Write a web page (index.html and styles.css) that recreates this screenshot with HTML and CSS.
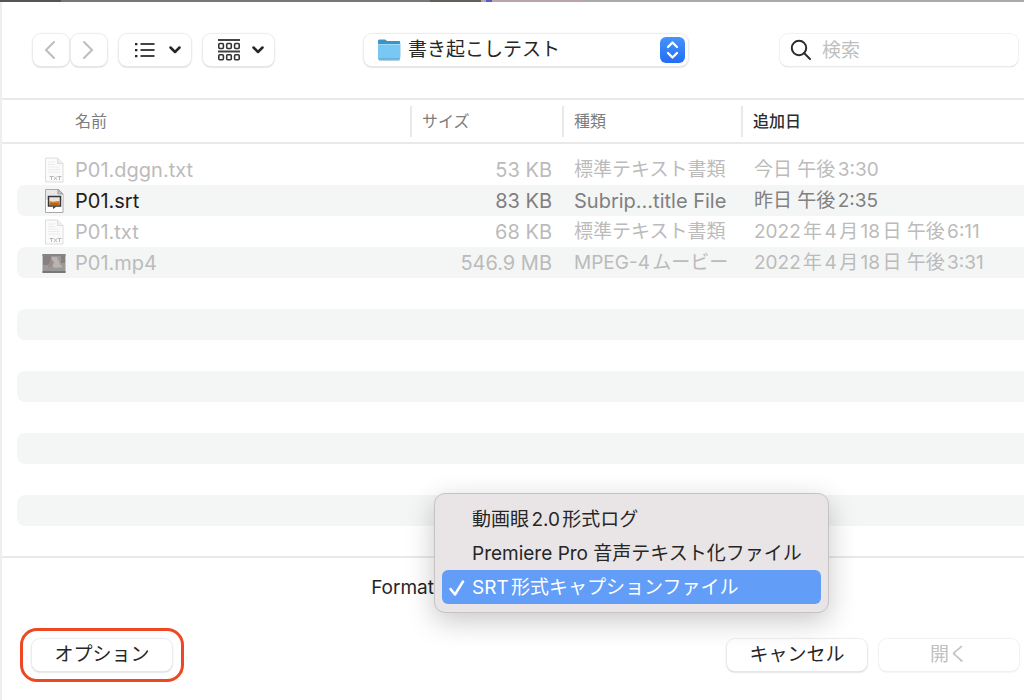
FILE: index.html
```html
<!DOCTYPE html>
<html lang="ja">
<head>
<meta charset="utf-8">
<meta name="viewport" content="width=device-width, initial-scale=1">
<title>書き起こしテスト</title>
<link rel="stylesheet" href="styles.css">
</head>
<body>
<div class="backdrop"></div>
<main class="dialog">
  <header class="toolbar">
    <div class="nav">
      <button class="button nav-button" type="button" aria-label="戻る" disabled>
        <svg width="12" height="20" viewBox="0 0 12 20"><path d="M10 2 2 10l8 8"/></svg>
      </button>
      <button class="button nav-button" type="button" aria-label="進む" disabled>
        <svg width="12" height="20" viewBox="0 0 12 20"><path d="m2 2 8 8-8 8"/></svg>
      </button>
    </div>
    <button class="button view-button" type="button" aria-label="リスト表示">
      <svg width="20" height="16" viewBox="0 0 20 16"><path class="thin" d="M5.5 2h14M5.5 8h14M5.5 14h14"/><path class="dots" d="M0 1h2.4v2.2H0zM0 7h2.4v2.2H0zM0 13h2.4v2.2H0z"/></svg>
      <svg width="12" height="10" viewBox="0 0 12 10"><path class="chevron" d="m1.5 2.5 4.5 4.5 4.5-4.5"/></svg>
    </button>
    <button class="button view-button group-button" type="button" aria-label="グループ">
      <svg width="22" height="22" viewBox="0 0 22 22"><path class="thin" d="M0 1h22M0 12.500h22"/><g class="cells"><rect x=".8" y="4.500" width="4.600" height="5" rx="1"/><rect x="8.700" y="4.500" width="4.600" height="5" rx="1"/><rect x="16.600" y="4.500" width="4.600" height="5" rx="1"/><rect x=".8" y="15.800" width="4.600" height="5" rx="1"/><rect x="8.700" y="15.800" width="4.600" height="5" rx="1"/><rect x="16.600" y="15.800" width="4.600" height="5" rx="1"/></g></svg>
      <svg width="12" height="10" viewBox="0 0 12 10"><path class="chevron" d="m1.500 2.500 4.500 4.500 4.500-4.500"/></svg>
    </button>
    <div class="button location">
      <svg width="24" height="22" viewBox="0 0 24 22"><path d="M1 2Q1 .5 2.500 .5h5.300q.7 0 1.200.6l.9.9H22q1.200 0 1.200 1.200V18H1z" fill="#3c93c8"/><rect x="1" y="5" width="22.200" height="16" rx="1.500" fill="#79c8f4"/><path d="M1 5.500h22.200" stroke="#a2dbf8"/><path d="M1.500 19.500h21.200" stroke="#67b4df"/><path d="M2 21h20.500" stroke="#6ca4c0"/></svg>
      <select class="location-select" aria-label="場所"><option>書き起こしテスト</option></select>
      <svg width="26" height="26" viewBox="0 0 26 26"><defs><linearGradient id="blue" x2="0" y2="1"><stop stop-color="#4594fb"/><stop offset="1" stop-color="#226df3"/></linearGradient></defs><rect width="25" height="26" rx="6" fill="url(#blue)"/><path d="m8 10 4.500-4.500L17 10M8 16l4.500 4.500L17 16" fill="none" stroke="#fff" stroke-width="2.300" stroke-linecap="round" stroke-linejoin="round"/></svg>
    </div>
    <label class="button search">
      <svg width="22" height="22" viewBox="0 0 22 22"><circle cx="9" cy="9" r="7.200"/><path d="m14 14 6 6"/></svg>
      <input class="search-input" type="search" placeholder="検索" aria-label="検索">
    </label>
  </header>

  <section class="list">
    <table class="files">
      <colgroup><col class="col-name"><col class="col-size"><col class="col-kind"><col></colgroup>
      <thead>
        <tr><th scope="col">名前</th><th scope="col"><span class="divided">サイズ</span></th><th scope="col"><span class="divided">種類</span></th><th scope="col" class="sorted"><span class="divided">追加日</span></th></tr>
      </thead>
      <tbody>
        <tr>
          <td><div class="file"><svg width="24" height="26" viewBox="0 0 24 26"><path d="M3.500 1h12l5.500 5.500V25h-17.500z" fill="#fbfbfb" stroke="#ddd"/><path d="M15.500 1v5.500H21" fill="#eee" stroke="#ddd"/><path d="M6 5h7M6 7.500h7M6 10h11M6 12.500h12M6 15h12" stroke="#ececec"/><path d="M7.500 19.500h4M9.500 19.500V23M12 19.500l3 3.500M15 19.500 12 23M15.500 19.500h4M17.500 19.500V23" stroke="#b8b8b8" fill="none"/></svg>P01.dggn.txt</div></td>
          <td>53 KB</td><td class="japanese">標準テキスト書類</td><td class="japanese">今日 午後3:30</td>
        </tr>
        <tr class="enabled">
          <td><div class="file"><svg width="24" height="26" viewBox="0 0 24 26"><path d="M3.500 1.500h13L21 6v18.500H3.500z" fill="#fff" stroke="#aaa"/><path d="M4 2h12v5h5v5H4z" fill="#e8e8e8"/><path d="M16 1.500V6h5z" fill="#ccc" stroke="#999"/><rect x="6.500" y="8.500" width="12" height="9.500" fill="#eee4da" stroke="#34383b" stroke-width="1.500"/><path d="M7.500 13q3 1 5 .5t5-.5v4h-10z" fill="#d57f27"/><path d="M7.500 16h10" stroke="#9e4e18"/><path d="M11 18.500h3.500L11 21z" fill="#3a3e41"/></svg>P01.srt</div></td>
          <td>83 KB</td><td>Subrip...title File</td><td class="japanese">昨日 午後2:35</td>
        </tr>
        <tr>
          <td><div class="file"><svg width="24" height="26" viewBox="0 0 24 26"><path d="M3.500 1h12l5.500 5.500V25h-17.500z" fill="#fbfbfb" stroke="#ddd"/><path d="M15.500 1v5.500H21" fill="#eee" stroke="#ddd"/><path d="M6 5h7M6 7.500h7M6 10h11M6 12.500h12M6 15h12" stroke="#ececec"/><path d="M7.500 19.500h4M9.500 19.500V23M12 19.500l3 3.500M15 19.500 12 23M15.500 19.500h4M17.500 19.500V23" stroke="#b8b8b8" fill="none"/></svg>P01.txt</div></td>
          <td>68 KB</td><td class="japanese">標準テキスト書類</td><td class="japanese">2022年4月18日 午後6:11</td>
        </tr>
        <tr>
          <td><div class="file"><svg width="24" height="26" viewBox="0 0 24 26"><rect x=".5" y="4" width="23" height="18.500" fill="#999"/><path d="M.5 4h23v2H.5z" fill="#858585"/><path d="M1 6h8v9H1zM19 6h4v7h-4z" fill="#888080"/><path d="M10 7h5l3 7 3 3-8 1-3-2-6 2 4-5z" fill="#bab3af"/><path d="m9 9 3 3-2 5-5 1z" fill="#9b8f8b"/><path d="M.5 21h23v2H.5z" fill="#777"/></svg>P01.mp4</div></td>
          <td>546.9 MB</td><td class="japanese">MPEG-4ムービー</td><td class="japanese">2022年4月18日 午後3:31</td>
        </tr>
        <tr><td></td><td></td><td></td><td></td></tr>
        <tr><td></td><td></td><td></td><td></td></tr>
        <tr><td></td><td></td><td></td><td></td></tr>
        <tr><td></td><td></td><td></td><td></td></tr>
        <tr><td></td><td></td><td></td><td></td></tr>
        <tr><td></td><td></td><td></td><td></td></tr>
        <tr><td></td><td></td><td></td><td></td></tr>
        <tr><td></td><td></td><td></td><td></td></tr>
      </tbody>
    </table>
  </section>

  <footer class="footer">
    <div class="format">
      <span class="format-label" id="format-label">Format</span>
      <div class="format-anchor">
        <div class="menu" role="listbox" aria-labelledby="format-label">
          <button class="menu-item" type="button" role="option" aria-selected="false">動画眼2.0形式ログ</button>
          <button class="menu-item" type="button" role="option" aria-selected="false">Premiere Pro 音声テキスト化ファイル</button>
          <button class="menu-item selected" type="button" role="option" aria-selected="true"><svg class="check" width="16" height="18" viewBox="0 0 16 18"><path d="m1.500 10 4.500 5.500L14 2.500"/></svg>SRT形式キャプションファイル</button>
        </div>
      </div>
    </div>
    <div class="actions">
      <div class="highlight"><button class="button action" type="button">オプション</button></div>
      <div class="confirm">
        <button class="button action" type="button">キャンセル</button>
        <button class="button action" type="button" disabled>開く</button>
      </div>
    </div>
  </footer>
</main>
</body>
</html>
```
FILE: styles.css
```css
* { box-sizing: border-box; }

body {
  margin: 0;
  height: 100vh;
  display: flex;
  flex-direction: column;
  overflow: hidden;
  background: #fff;
  color: #262626;
  font: 19px/24px Inter, "Noto Sans CJK JP", sans-serif;
  text-autospace: normal;
}

button, input, select { font: inherit; color: inherit; text-autospace: inherit; }

.backdrop {
  flex: none;
  height: 2px;
  background: linear-gradient(90deg, #555 0 6%, #777 6% 29%, #777 42%, #655f5c 42% 47%, #aaa 47% 47.500%, #5959c8 47.500% 48%, #b9a5ab 48% 57%, #aaa 57%);
}

.dialog {
  flex: 1;
  display: flex;
  flex-direction: column;
  min-height: 0;
  border-left: 2px solid #eee;
}

.toolbar {
  display: flex;
  align-items: center;
  padding: 32px 6px 32px 31px;
}

.button {
  height: 32px;
  border: 0;
  border-radius: 8px;
  background: #fff;
  box-shadow: 0 0 1px 1px #ececec, 0 1px 2px #b0b0b0;
}

.button:disabled { color: #c0c0c0; }

.nav { display: flex; gap: 2px; margin-right: 12px; }

.nav-button {
  display: flex;
  align-items: center;
  justify-content: center;
  width: 36px;
  padding: 0 2px 0 0;
}

.nav-button path { fill: none; stroke: #bdbdbd; stroke-width: 2; stroke-linecap: round; }

.view-button {
  display: flex;
  align-items: center;
  justify-content: space-between;
  width: 72px;
  margin-right: 12px;
  padding: 0 10px 0 16px;
}

.group-button { width: 71px; margin-right: 0; padding-left: 15px; }

.thin { stroke: #444; stroke-width: 1.800; }
.dots { fill: #262626; }
.chevron { fill: none; stroke: #262626; stroke-width: 2.500; stroke-linecap: round; stroke-linejoin: round; }
.cells { fill: none; stroke: #333; stroke-width: 1.600; }

.location {
  flex: 1;
  display: flex;
  align-items: center;
  gap: 7px;
  margin: 0 92px 0 90px;
  padding: 0 2px 0 13px;
}

.location-select {
  flex: 1;
  min-width: 0;
  padding: 0;
  border: 0;
  background: none;
  appearance: none;
}

.search {
  display: flex;
  align-items: center;
  gap: 10px;
  width: 238px;
  padding: 0 10px;
  box-shadow: 0 0 1px 1px #f1f1f1, 0 1px 1px #b4b4b4;
}

.search svg { fill: none; stroke: #2b2b2b; stroke-width: 2; stroke-linecap: round; }

.search-input {
  flex: 1;
  min-width: 0;
  padding: 2px 0 0;
  border: 0;
  outline: 0;
  background: none;
}

.search-input::placeholder { color: #bfbfbf; }

.list {
  flex: 1;
  min-height: 0;
  padding-bottom: 30px;
  border-top: 2px solid #e9e9e9;
}

.files {
  width: 100%;
  height: 100%;
  table-layout: fixed;
  border-spacing: 0;
}

.col-name { width: 408px; }
.col-size { width: 152px; }
.col-kind { width: 179px; }

th {
  height: 44px;
  padding: 0;
  border-bottom: 2px solid #e9e9e9;
  color: #7d7d7d;
  font-size: 16px;
  font-weight: 400;
  text-align: left;
}

th:first-child { padding-left: 73px; }

.sorted { color: #2d2d2d; font-weight: 500; }

.divided {
  display: block;
  padding-left: 10px;
  border-left: 2px solid #e9e9e9;
  line-height: 31px;
}

tbody::before { content: ""; display: block; height: 6px; }

td {
  height: 31px;
  padding: 0 0 0 12px;
  color: #bbb;
  font-size: 20px;
  line-height: 24px;
  white-space: nowrap;
}

.japanese { font-size: 19px; }

td:first-child {
  padding-left: 25px;
  border-left: 15px solid transparent;
  border-radius: 23px 0 0 23px / 8px 0 0 8px;
  background-clip: padding-box;
}

td:nth-child(2) { padding-right: 10px; text-align: right; }
td:last-child { padding-left: 13px; }

tbody tr:nth-child(even) td { background-color: #f4f5f5; }

.enabled td { color: #808080; }
.enabled td:first-child { color: #202020; }

.file { display: flex; align-items: center; gap: 9px; }

.footer {
  padding: 12px 5px 18px 18px;
  border-top: 2px solid #e9e9e9;
}

.format { display: flex; align-items: center; height: 36px; }

.format-label { width: 414px; text-align: right; }

.format-anchor { position: relative; align-self: stretch; }

.menu {
  position: absolute;
  left: 0;
  bottom: -7px;
  width: 395px;
  padding: 8px 7px;
  border: 1px solid #c5c3c4;
  border-radius: 11px;
  background: #e9e5e6;
  box-shadow: 0 8px 28px rgba(0, 0, 0, .22);
}

.menu-item {
  position: relative;
  display: block;
  width: 100%;
  height: 34px;
  padding: 2px 0 0 30px;
  border: 0;
  border-radius: 6px;
  background: none;
  text-align: left;
  white-space: nowrap;
}

.selected { background: #629df8; color: #fff; }

.check {
  position: absolute;
  left: 7px;
  top: 9px;
  fill: none;
  stroke: #fff;
  stroke-width: 2.500;
  stroke-linecap: round;
  stroke-linejoin: round;
}

.actions {
  display: flex;
  align-items: center;
  justify-content: space-between;
  margin-top: 22px;
}

.highlight {
  padding: 8px 9px;
  border: 3px solid #ee4823;
  border-radius: 17px;
}

.confirm { display: flex; gap: 12px; }

.action { display: block; width: 140px; padding: 0; }

.action:disabled { box-shadow: 0 0 1px 1px #f1f1f1, 0 1px 2px #e0e0e0; }
```
